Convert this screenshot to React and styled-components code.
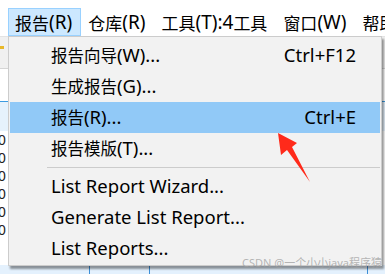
import React from "react";
import styled, { createGlobalStyle } from "styled-components";

const GlobalStyle = createGlobalStyle`
  html, body { margin: 0; padding: 0; background: #ffffff; }
  body {
    width: 385px; height: 274px; overflow: hidden;
    font-family: "Noto Sans", "Noto Sans CJK SC", sans-serif;
  }
`;

const Window = styled.div`
  position: relative;
  width: 385px;
  height: 274px;
  overflow: hidden;
  background: #ffffff;
  display: flex;
  flex-direction: column;
`;

const MenuBar = styled.div`
  display: flex;
  align-items: stretch;
  height: 28px;
  padding: 8px 0 0 8px;
  background: #ffffff;
  flex: none;
`;

const BarItem = styled.div`
  display: flex;
  align-items: center;
  padding: 0 8px 0 6px;
  font-size: 19px;
  --cjk: 17px;
  color: #000;
  white-space: nowrap;
  box-sizing: border-box;
  border: 1px solid ${(p) => (p.$active ? "#99d1ff" : "transparent")};
  background: ${(p) => (p.$active ? "#cce8ff" : "transparent")};
`;

const Cjk = styled.span`
  font-family: "Noto Sans CJK SC", sans-serif;
  font-size: var(--cjk, 16.5px);
`;

const Body = styled.div`
  flex: 1;
  display: flex;
  flex-direction: column;
`;

const Toolbar = styled.div`
  height: 31px;
  background: #f0f0f0;
  border-top: 1px solid #e3e3e3;
  border-bottom: 1px solid #d5d5d5;
  display: flex;
  align-items: center;
`;

const ToolIcon = styled.div`
  width: 4px;
  height: 3px;
  margin-top: -10px;
  background: #e8b82a;
`;

const Blank = styled.div`
  height: 32px;
  background: #ffffff;
`;

const SelRow = styled.div`
  height: 29px;
  border-top: 1px solid #3c9be0;
  background: #e6f2fc;
`;

const DataRow = styled.div`
  height: 18px;
  display: flex;
  align-items: center;
  font-size: 14px;
  color: #222;
  margin-left: -2px;
  font-family: "Liberation Sans", sans-serif;
`;

const Footer = styled.div`
  margin-top: auto;
  height: 9px;
  background: #e4f1fd;
  display: grid;
  grid-template-columns: 90px 60px 218px 1fr;
`;

const FootCell = styled.div`
  border-right: 1px solid #3d8fd6;
`;

const Menu = styled.div`
  position: absolute;
  left: 8px;
  top: 36px;
  width: 374px;
  box-sizing: border-box;
  background: #f2f2f2;
  border: 1px solid #cccccc;
  padding: 3px 1px 1px 1px;
  box-shadow: 2px 3px 2px rgba(0, 0, 0, 0.4);
  display: flex;
  flex-direction: column;
`;

const Item = styled.div`
  height: 31px;
  display: flex;
  align-items: center;
  justify-content: space-between;
  padding: 0 24px 0 41px;
  font-size: 18.5px;
  --cjk: 16.5px;
  color: #000;
  white-space: nowrap;
  background: ${(p) => (p.$hl ? "#91c9f7" : "transparent")};
`;

const Label = styled.span`
  line-height: 1;
`;

const Shortcut = styled.span`
  line-height: 1;
`;

const Separator = styled.div`
  height: 1px;
  margin: 3px 0 3px 37px;
  background: #cccccc;
`;

const Arrow = styled.svg`
  position: absolute;
  left: 0;
  top: 0;
  pointer-events: none;
`;

const Watermark = styled.div`
  position: absolute;
  right: 3px;
  top: 254px;
  font-size: 11px;
  color: rgba(160, 160, 160, 0.75);
  font-family: "Noto Sans", "Noto Sans CJK SC", sans-serif;
  white-space: nowrap;
`;

function T({ children }) {
  const parts = String(children).split(/([\u4e00-\u9fff]+)/);
  return parts.map((p, i) =>
    /[\u4e00-\u9fff]/.test(p) ? <Cjk key={i}>{p}</Cjk> : <React.Fragment key={i}>{p}</React.Fragment>
  );
}

const items = [
  { label: "报告向导(W)...", sc: "Ctrl+F12" },
  { label: "生成报告(G)..." },
  { label: "报告(R)...", sc: "Ctrl+E", hl: true },
  { label: "报告模版(T)..." },
];

const items2 = [
  { label: "List Report Wizard..." },
  { label: "Generate List Report..." },
  { label: "List Reports..." },
];

const barItems = ["报告(R)", "仓库(R)", "工具(T):4工具", "窗口(W)", "帮助(H)"];

export default function App() {
  return (
    <>
      <GlobalStyle />
      <Window>
        <MenuBar>
          {barItems.map((b, i) => (
            <BarItem key={b} $active={i === 0}>
              <T>{b}</T>
            </BarItem>
          ))}
        </MenuBar>
        <Body>
          <Toolbar>
            <ToolIcon />
          </Toolbar>
          <Blank />
          <SelRow />
          {Array.from({ length: 6 }).map((_, i) => (
            <DataRow key={i}>0</DataRow>
          ))}
          <Footer>
            <FootCell />
            <FootCell />
            <FootCell />
            <div />
          </Footer>
        </Body>
        <Menu>
          {items.map((it) => (
            <Item key={it.label} $hl={it.hl}>
              <Label>
                <T>{it.label}</T>
              </Label>
              {it.sc && <Shortcut>{it.sc}</Shortcut>}
            </Item>
          ))}
          <Separator />
          {items2.map((it) => (
            <Item key={it.label}>
              <Label>{it.label}</Label>
            </Item>
          ))}
        </Menu>
        <Arrow width="385" height="274" viewBox="0 0 385 274">
          <polygon
            points="278,133 297,143 292,147 310,182 287,150 281,155"
            fill="#ff2a1a"
          />
        </Arrow>
        <Watermark>CSDN @一个小小java程序猿</Watermark>
      </Window>
    </>
  );
}
